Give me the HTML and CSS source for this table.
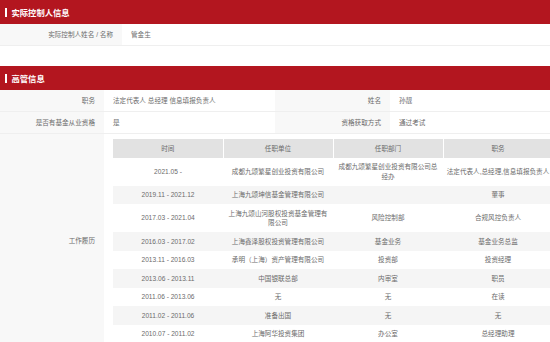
FILE: index.html
```html
<!DOCTYPE html>
<html lang="zh-CN">
<head>
    <meta charset="UTF-8">
    <meta name="viewport" content="width=device-width, initial-scale=1.0">
    <title>实际控制人信息</title>
    <link rel="stylesheet" href="styles.css">
</head>
<body>
    <div class="section">
        <div class="section-title">实际控制人信息</div>
        <table class="info-table controller-table">
            <colgroup>
                <col class="col-label-wide">
                <col>
            </colgroup>
            <tr>
                <td class="label">实际控制人姓名 / 名称</td>
                <td class="value">管金生</td>
            </tr>
        </table>
    </div>

    <div class="section">
        <div class="section-title">高管信息</div>
        <table class="info-table manager-table">
            <colgroup>
                <col class="col-label">
                <col class="col-value">
                <col class="col-label-2">
                <col>
            </colgroup>
            <tr>
                <td class="label">职务</td>
                <td class="value">法定代表人 总经理 信息填报负责人</td>
                <td class="label">姓名</td>
                <td class="value">孙靓</td>
            </tr>
            <tr>
                <td class="label">是否有基金从业资格</td>
                <td class="value">是</td>
                <td class="label">资格获取方式</td>
                <td class="value">通过考试</td>
            </tr>
            <tr>
                <td class="label">工作履历</td>
                <td class="value resume-cell" colspan="3">
                    <table class="resume-table">
                        <thead>
                            <tr>
                                <th>时间</th>
                                <th>任职单位</th>
                                <th>任职部门</th>
                                <th>职务</th>
                            </tr>
                        </thead>
                        <tbody>
                            <tr>
                                <td>2021.05 -</td>
                                <td>成都九颂繁星创业投资有限公司</td>
                                <td>成都九颂繁星创业投资有限公司总经办</td>
                                <td>法定代表人,总经理,信息填报负责人</td>
                            </tr>
                            <tr>
                                <td>2019.11 - 2021.12</td>
                                <td>上海九颂坤信基金管理有限公司</td>
                                <td></td>
                                <td>董事</td>
                            </tr>
                            <tr>
                                <td>2017.03 - 2021.04</td>
                                <td>上海九颂山河股权投资基金管理有限公司</td>
                                <td>风险控制部</td>
                                <td>合规风控负责人</td>
                            </tr>
                            <tr>
                                <td>2016.03 - 2017.02</td>
                                <td>上海鑫泽股权投资管理有限公司</td>
                                <td>基金业务</td>
                                <td>基金业务总监</td>
                            </tr>
                            <tr>
                                <td>2013.11 - 2016.03</td>
                                <td>承明（上海）资产管理有限公司</td>
                                <td>投资部</td>
                                <td>投资经理</td>
                            </tr>
                            <tr>
                                <td>2013.06 - 2013.11</td>
                                <td>中国银联总部</td>
                                <td>内审室</td>
                                <td>职员</td>
                            </tr>
                            <tr>
                                <td>2011.06 - 2013.06</td>
                                <td>无</td>
                                <td>无</td>
                                <td>在读</td>
                            </tr>
                            <tr>
                                <td>2011.02 - 2011.06</td>
                                <td>准备出国</td>
                                <td>无</td>
                                <td>无</td>
                            </tr>
                            <tr>
                                <td>2010.07 - 2011.02</td>
                                <td>上海阿华投资集团</td>
                                <td>办公室</td>
                                <td>总经理助理</td>
                            </tr>
                        </tbody>
                    </table>
                </td>
            </tr>
        </table>
    </div>
</body>
</html>
```

FILE: styles.css
```css
body {
    margin: 0;
    width: 550px;
    overflow: hidden;
    font-family: "Liberation Sans", "Noto Sans CJK SC", sans-serif;
    font-size: 6.6px;
    color: #6b6b6b;
    background-color: white;
}
.section + .section {
    margin-top: 20px;
}
.section-title {
    display: flex;
    align-items: center;
    gap: 5px;
    height: 24px;
    padding-left: 5px;
    background-color: #b3161f;
    color: white;
    font-size: 8.3px;
    font-weight: bold;
}
.section-title::before {
    content: "";
    width: 1.5px;
    height: 9px;
    background-color: white;
}
.info-table {
    width: 100%;
    border-collapse: collapse;
    table-layout: fixed;
}
.col-label-wide {
    width: 122px;
}
.col-label {
    width: 104px;
}
.col-value {
    width: 171px;
}
.col-label-2 {
    width: 115px;
}
.info-table > tbody > tr > td {
    padding: 5.5px 9px;
    line-height: 10px;
    border-bottom: 1px solid #efefef;
    vertical-align: middle;
}
.info-table td.label {
    background-color: #f8f8f8;
    text-align: right;
}
.info-table td.value {
    background-color: white;
}
.info-table > tbody > tr > td.resume-cell {
    padding: 5px 0 5px 9px;
    border-bottom: none;
}
.resume-table {
    width: 440px;
    border-collapse: collapse;
    table-layout: fixed;
}
.resume-table th,
.resume-table td {
    box-sizing: border-box;
    width: 110px;
    padding: 4.5px 4px;
    line-height: 9.5px;
    text-align: center;
    font-weight: normal;
}
.resume-table td:last-child {
    padding-left: 1px;
    padding-right: 1px;
}
.resume-table th {
    background-color: #e2e2e2;
    border-right: 1px solid white;
}
.resume-table tbody tr:nth-child(even) td {
    background-color: #f5f5f5;
}
```
